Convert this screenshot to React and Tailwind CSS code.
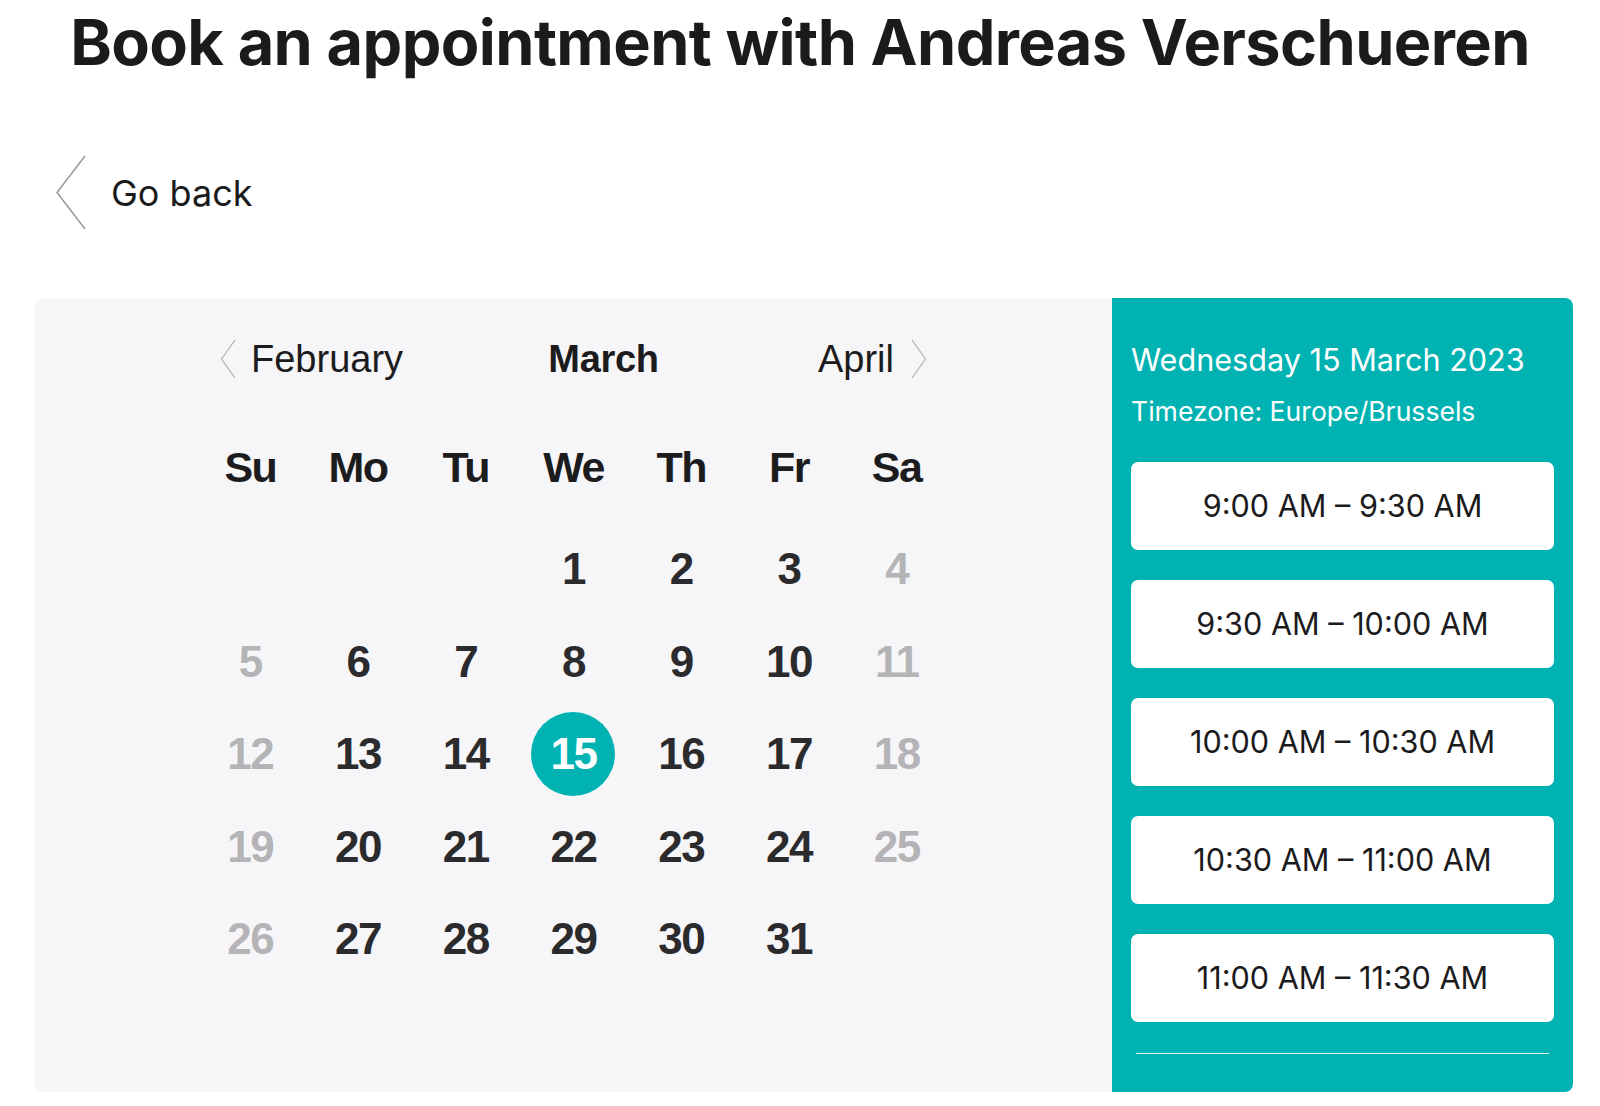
import { useState } from "react";

const WEEKDAYS = ["Su", "Mo", "Tu", "We", "Th", "Fr", "Sa"];
const SLOTS = ["9:00 AM – 9:30 AM", "9:30 AM – 10:00 AM", "10:00 AM – 10:30 AM", "10:30 AM – 11:00 AM", "11:00 AM – 11:30 AM"];

// March 2023 starts on a Wednesday
const DAYS = [...Array(3).fill(null), ...Array.from({ length: 31 }, (_, i) => i + 1), null];

export default function App() {
  const [selected, setSelected] = useState(15);

  return (
    <div className="h-[1106px] w-full overflow-hidden bg-white font-['Inter',sans-serif] text-[#1b1b1d]">
      <h1 className="text-center text-[63px] font-bold leading-[84px] tracking-[-0.6px]">
        Book an appointment with Andreas Verschueren
      </h1>

      <button className="ml-[55px] mt-[71px] flex items-center gap-[24px]">
        <svg width="32" height="76" viewBox="0 0 32 76" fill="none">
          <path d="M30 1 L2 37.5 L30 74" stroke="#9a9a9a" strokeWidth="1.5" />
        </svg>
        <span className="text-[36px] leading-[44px] text-[#1b1b1d]">Go back</span>
      </button>

      <div className="mx-[35px] mt-[67px] flex h-[794px] w-[1538px] overflow-hidden rounded-[8px]">
        <div className="flex-1 bg-[#f6f6f8] pt-[41px] font-['Liberation_Sans',Arial,sans-serif]">
          <div className="mx-auto flex h-[40px] w-[707px] items-center justify-between text-[#1c1c1e]">
            <div className="flex items-center gap-[15px]">
              <Chevron dir="left" />
              <span className="text-[38px] leading-none">February</span>
            </div>
            <span className="mr-[14px] text-[38px] font-bold leading-none tracking-[-0.3px]">March</span>
            <div className="flex items-center gap-[17px]">
              <span className="text-[38px] leading-none">April</span>
              <Chevron dir="right" />
            </div>
          </div>

          <div className="mx-auto mt-[42px] grid w-[754px] grid-cols-7">
            {WEEKDAYS.map(d => (
              <div key={d} className="flex h-[92px] items-center justify-center text-[43px] font-bold tracking-[-1.5px] text-[#1c1c1e]">
                {d}
              </div>
            ))}
          </div>

          <div className="mx-auto mt-[10px] grid w-[754px] grid-cols-7">
            {DAYS.map((d, i) => {
              const weekend = i % 7 === 0 || i % 7 === 6;
              const active = d === selected;
              return (
                <div key={i} className="flex h-[92.5px] items-center justify-center">
                  {d && (
                    <button
                      onClick={() => !weekend && setSelected(d)}
                      className={`flex h-[84px] w-[84px] items-center justify-center rounded-full text-[44px] font-bold tracking-[-1.5px]
                        ${active ? "bg-[#00b2b2] text-white" : weekend ? "text-[#b4b4b6]" : "text-[#2b2b2d]"}`}>
                      {d}
                    </button>
                  )}
                </div>
              );
            })}
          </div>
        </div>

        <div className="w-[461px] bg-[#00b2b2] px-[19px] pt-[42px] text-white">
          <p className="text-[30.6px] leading-[40px]">Wednesday {selected} March 2023</p>
          <p className="mt-[15px] text-[26.6px] leading-[32px]">Timezone: Europe/Brussels</p>
          <div className="mt-[35px] flex flex-col gap-[30px]">
            {SLOTS.map(s => (
              <button key={s} className="flex h-[88px] items-center justify-center rounded-[7px] bg-white text-[30.6px] text-[#1b1b1d]">
                {s}
              </button>
            ))}
          </div>
          <div className="mx-[5px] mt-[31px] h-px bg-[#d9f3f3]" />
        </div>
      </div>
    </div>
  );
}

function Chevron({ dir }) {
  return (
    <svg width="16" height="40" viewBox="0 0 16 40" fill="none">
      <path d={dir === "left" ? "M15 1 L1.5 20 L15 39" : "M1 1 L14.5 20 L1 39"} stroke="#b0b0b0" strokeWidth="1.2" />
    </svg>
  );
}
